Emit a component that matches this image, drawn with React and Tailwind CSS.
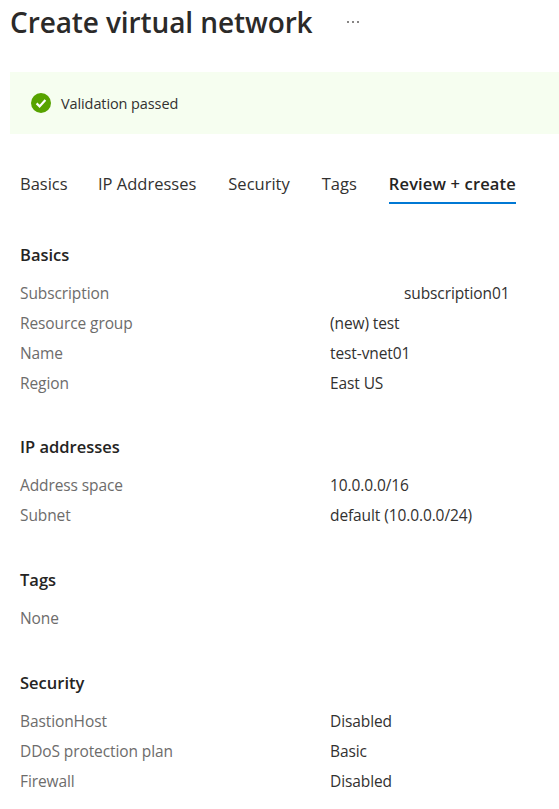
const font = { fontFamily: '"Open Sans", "Noto Sans", sans-serif' };

const label_class = "w-[310px] shrink-0 text-[#6d6c6b]";
const value_class = "text-[#323130]";

const Row = ({ label, value, indent }) => (
    <div className="flex h-[30px] items-center text-[15.5px] tracking-[-0.1px]">
        <div className={label_class}>{label}</div>
        <div className={value_class + (indent ? " pl-[74px]" : "")}>{value}</div>
    </div>
);

const Section = ({ title, rows, className }) => (
    <section className={className}>
        <h2 className="h-[24px] text-[16.5px] leading-[24px] font-semibold text-[#252423]">{title}</h2>
        <div className="mt-[12px]">
            {rows.map((row) => (
                <Row key={row.label} {...row} />
            ))}
        </div>
    </section>
);

export default function App() {
    return (
        <div style={font} className="h-[809px] w-[559px] overflow-hidden bg-white">
            <div className="flex h-[44px] items-center pl-[10px]">
                <h1 className="text-[28px] leading-[44px] font-semibold tracking-[-0.1px] text-[#2b2a29]">Create virtual network</h1>
                <span className="ml-[34px] flex gap-[3px]">
                    <i className="h-[2px] w-[2px] rounded-full bg-[#605e5c]" />
                    <i className="h-[2px] w-[2px] rounded-full bg-[#605e5c]" />
                    <i className="h-[2px] w-[2px] rounded-full bg-[#605e5c]" />
                </span>
            </div>

            <div className="mt-[28px] ml-[10px] flex h-[62px] items-center gap-[10px] bg-[#f6fef0] pl-[21px]">
                <svg width="20" height="20" viewBox="0 0 20 20">
                    <circle cx="10" cy="10" r="10" fill="#57a300" />
                    <path d="M5.6 10.4l3 3 5.8-6.4" fill="none" stroke="#fff" strokeWidth="2.2" />
                </svg>
                <span className="pt-[2px] text-[14.5px] tracking-[-0.1px] text-[#323130]">Validation passed</span>
            </div>

            <nav className="mt-[32px] flex h-[38px] gap-[32px] pl-[20px] text-[16.5px] text-[#323130]">
                <div className="w-[46px] leading-[36px]">Basics</div>
                <div className="leading-[36px]">IP Addresses</div>
                <div className="leading-[36px]">Security</div>
                <div className="leading-[36px]">Tags</div>
                <div className="border-b-[2px] border-[#0078d4] leading-[36px] font-semibold tracking-[0.15px] text-[#252423]">Review + create</div>
            </nav>

            <div className="pl-[20px]">
                <Section
                    className="mt-[39px]"
                    title="Basics"
                    rows={[
                        { label: "Subscription", value: "subscription01", indent: true },
                        { label: "Resource group", value: "(new) test" },
                        { label: "Name", value: "test-vnet01" },
                        { label: "Region", value: "East US" },
                    ]}
                />
                <Section
                    className="mt-[36px]"
                    title="IP addresses"
                    rows={[
                        { label: "Address space", value: "10.0.0.0/16" },
                        { label: "Subnet", value: "default (10.0.0.0/24)" },
                    ]}
                />
                <Section className="mt-[37px]" title="Tags" rows={[{ label: "None", value: "" }]} />
                <Section
                    className="mt-[37px]"
                    title="Security"
                    rows={[
                        { label: "BastionHost", value: "Disabled" },
                        { label: "DDoS protection plan", value: "Basic" },
                        { label: "Firewall", value: "Disabled" },
                    ]}
                />
            </div>
        </div>
    );
}
